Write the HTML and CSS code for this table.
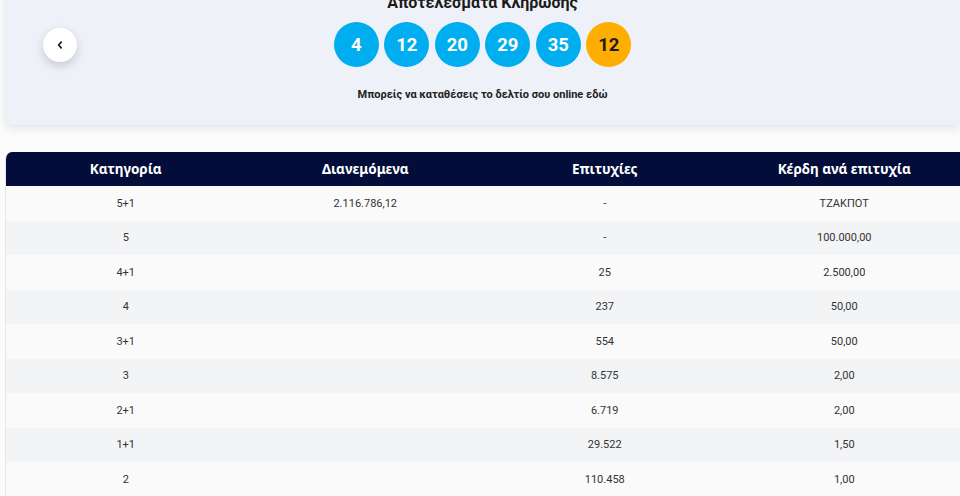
FILE: index.html
```html
<!DOCTYPE html>
<html lang="el">
<head>
<meta charset="utf-8">
<link rel="stylesheet" href="styles.css">
</head>
<body>
<div class="page">
  <section class="draw-card">
    <div class="nav-col">
      <button class="back-btn" aria-label="Πίσω">
        <svg width="10" height="10" viewBox="0 0 10 10"><path d="M6.2 2.2 L3.6 5 L6.2 7.8" fill="none" stroke="#222" stroke-width="1.8" stroke-linecap="round" stroke-linejoin="round"/></svg>
      </button>
    </div>
    <div class="center-col">
      <h2 class="title">Αποτελέσματα Κλήρωσης</h2>
      <div class="balls">
        <span class="ball">4</span>
        <span class="ball">12</span>
        <span class="ball">20</span>
        <span class="ball">29</span>
        <span class="ball">35</span>
        <span class="ball ball-joker">12</span>
      </div>
      <p class="cta">Μπορείς να καταθέσεις το δελτίο σου online εδώ</p>
    </div>
    <div class="side-col"></div>
  </section>

  <div class="table-wrap">
    <table class="results">
      <thead>
        <tr><th>Κατηγορία</th><th>Διανεμόμενα</th><th>Επιτυχίες</th><th>Κέρδη ανά επιτυχία</th></tr>
      </thead>
      <tbody>
        <tr><td>5+1</td><td>2.116.786,12</td><td>-</td><td>ΤΖΑΚΠΟΤ</td></tr>
        <tr><td>5</td><td></td><td>-</td><td>100.000,00</td></tr>
        <tr><td>4+1</td><td></td><td>25</td><td>2.500,00</td></tr>
        <tr><td>4</td><td></td><td>237</td><td>50,00</td></tr>
        <tr><td>3+1</td><td></td><td>554</td><td>50,00</td></tr>
        <tr><td>3</td><td></td><td>8.575</td><td>2,00</td></tr>
        <tr><td>2+1</td><td></td><td>6.719</td><td>2,00</td></tr>
        <tr><td>1+1</td><td></td><td>29.522</td><td>1,50</td></tr>
        <tr><td>2</td><td></td><td>110.458</td><td>1,00</td></tr>
      </tbody>
    </table>
  </div>
</div>
</body>
</html>
```

FILE: styles.css
```css
html, body {
  margin: 0;
  padding: 0;
  background: #fcfcfd;
  overflow: hidden;
  width: 960px;
  height: 496px;
}

.page {
  padding-left: 5px;
  font-family: Roboto, "Noto Sans", Arial, sans-serif;
  color: #333;
}

.draw-card {
  margin-top: -7px;
  width: 955px;
  height: 132px;
  box-sizing: border-box;
  background: #eef1f7;
  border-radius: 0 0 0 8px;
  box-shadow: 0 4px 8px rgba(30, 40, 70, 0.10);
  display: grid;
  grid-template-columns: 1fr auto 1fr;
}

.nav-col {
  padding: 35px 0 0 38px;
}

.back-btn {
  width: 34px;
  height: 34px;
  border: none;
  border-radius: 50%;
  background: #fff;
  box-shadow: 0 4px 10px rgba(20, 30, 60, 0.18);
  display: flex;
  align-items: center;
  justify-content: center;
  padding: 0;
}

.center-col {
  display: flex;
  flex-direction: column;
  align-items: center;
}

.title {
  margin: 0;
  font-size: 16px;
  line-height: 20px;
  font-weight: 700;
  color: #1b1b1b;
}

.balls {
  display: flex;
  gap: 5.5px;
  margin-top: 9px;
}

.ball {
  width: 45px;
  height: 45px;
  border-radius: 50%;
  background: #00aeef;
  color: #fff;
  font-weight: 700;
  font-size: 18.5px;
  display: flex;
  align-items: center;
  justify-content: center;
}

.ball-joker {
  background: #ffad00;
  color: #1e1e1e;
}

.cta {
  margin: 20px 0 0;
  font-size: 11px;
  line-height: 16px;
  font-weight: 700;
  color: #222;
}

.table-wrap {
  margin-top: 27px;
  width: 958px;
  border-left: 1px solid #e6e7ea;
  border-radius: 7px 0 0 0;
  overflow: hidden;
}

.results {
  width: 958px;
  border-collapse: collapse;
  table-layout: fixed;
}

.results th {
  background: #020d3a;
  color: #fff;
  height: 34px;
  padding: 0;
  font-family: "Noto Sans", Inter, sans-serif;
  font-size: 13.5px;
  font-weight: 700;
  text-align: center;
}

.results td {
  height: 34.5px;
  padding: 0;
  font-size: 11px;
  color: #333;
  text-align: center;
}

.results tbody tr:nth-child(odd) td { background: #fafafa; }
.results tbody tr:nth-child(even) td { background: #f3f4f6; }
```
